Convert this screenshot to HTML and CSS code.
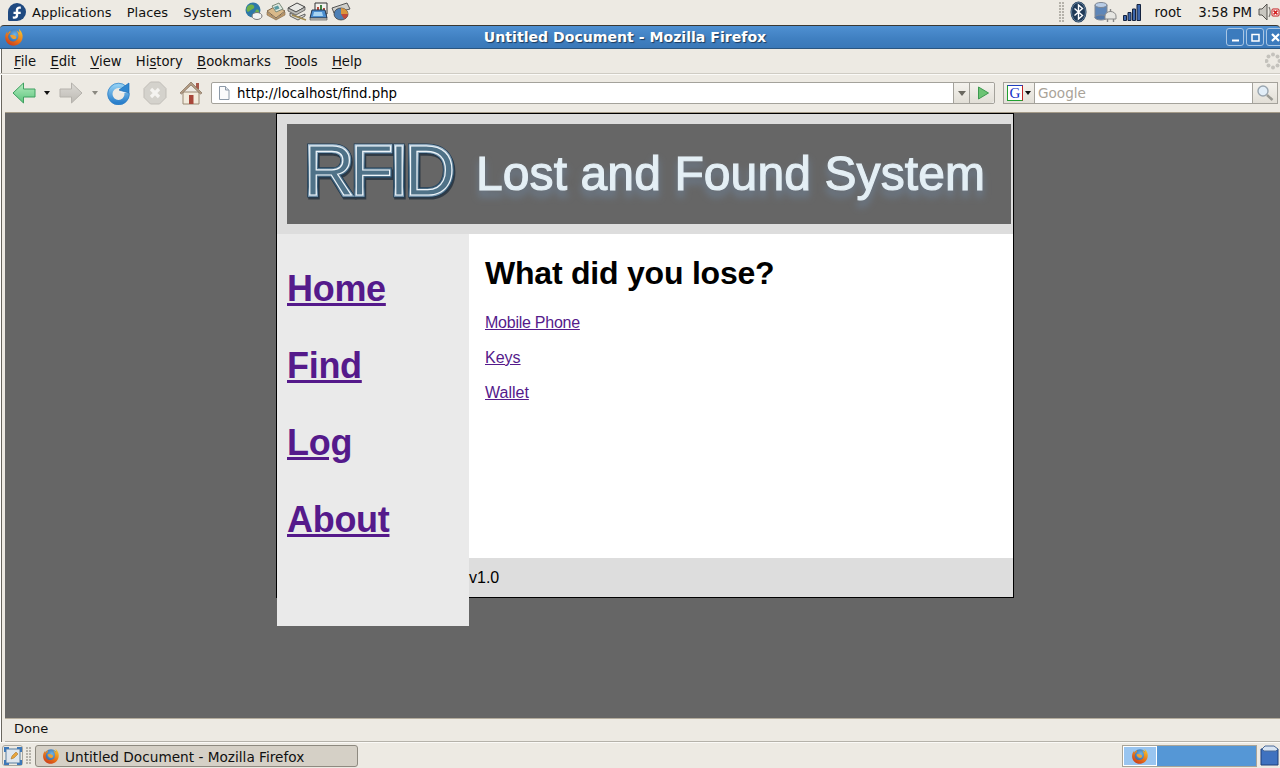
FILE: index.html
```html
<!DOCTYPE html>
<html lang="en">
<head>
<meta charset="utf-8">
<title>Untitled Document - Mozilla Firefox</title>
<link rel="stylesheet" href="styles.css">
</head>
<body>
<svg class="defs" width="0" height="0" aria-hidden="true">
  <defs>
    <radialGradient id="ffGlobe" cx="0.55" cy="0.35" r="0.7"><stop offset="0" stop-color="#6fb6e8"/><stop offset="1" stop-color="#1d4f96"/></radialGradient>
    <linearGradient id="ffFox" x1="0.8" y1="0" x2="0.2" y2="1"><stop offset="0" stop-color="#f7c52e"/><stop offset="0.55" stop-color="#e8731a"/><stop offset="1" stop-color="#c8391a"/></linearGradient>
    <linearGradient id="backG" x1="0" y1="0" x2="0" y2="1"><stop offset="0" stop-color="#b5ecc0"/><stop offset="1" stop-color="#5cc47c"/></linearGradient>
    <linearGradient id="fwdG" x1="0" y1="0" x2="0" y2="1"><stop offset="0" stop-color="#dcdad5"/><stop offset="1" stop-color="#bdbab4"/></linearGradient>
    <linearGradient id="reloadG" x1="0" y1="0" x2="0" y2="1"><stop offset="0" stop-color="#8fcdf2"/><stop offset="1" stop-color="#2a7fcb"/></linearGradient>
    <linearGradient id="steel" gradientUnits="userSpaceOnUse" x1="0" y1="18" x2="0" y2="74"><stop offset="0" stop-color="#b4cbdd"/><stop offset="0.45" stop-color="#54778f"/><stop offset="0.8" stop-color="#3e6078"/><stop offset="1" stop-color="#8fadc4"/></linearGradient>
    <filter id="glow" x="-5%" y="-30%" width="110%" height="170%"><feGaussianBlur stdDeviation="3.500"/></filter>
    <filter id="soft" x="-5%" y="-20%" width="110%" height="140%"><feGaussianBlur stdDeviation="0.6"/></filter>
    <g id="firefox">
      <circle cx="10" cy="10" r="7.5" fill="url(#ffGlobe)"/>
      <path d="M15.5 2.5c2.6 2.6 3.6 5.6 3 8.6-.8 4.6-4.6 7.6-9 7.600C4.800 18.700 1.200 15 1.200 10.300c0-2.300.8-4.300 2.100-5.800-.1 1-.1 1.800.2 2.400.6-1.500 1.800-2.800 3.200-3.500-.4 1-.4 1.600-.1 2.100-1.800 1.200-2.800 3-2.300 5.200.6 2.500 3 4 5.500 3.700 2.500-.3 4.500-2.300 4.600-4.800.1-2.600-.9-4.800-2-6 1.300.4 2.400 1.200 3.100 2.200-.1-1.300-.3-2.400-.5-3.800z" fill="url(#ffFox)"/>
      <path d="M6 8.500c1.500-1.200 3.500-.5 5 .2 1.500.7 1.800 2.300.5 3.100-1.500.9-4-.2-5.500-3.300z" fill="#f0a030"/>
    </g>
    <text id="rfidWord" x="17" y="71" class="rfid-word">RFID</text>
    <text id="bannerWord" x="189" y="66" class="banner-word">Lost and Found System</text>
  </defs>
</svg>

<header class="panel panel-top">
  <svg class="fedora" width="20" height="20" viewBox="0 0 20 20"><path d="M10 1a9 9 0 0 1 0 18H2.500A1.500 1.500 0 0 1 1 17.500V10a9 9 0 0 1 9-9z" fill="#204a80"/><path d="M13.800 4.600c-2.500-.8-5 .6-5 3.200v2H6.500v2.300h2.300v1c0 1.500-1.600 1.800-3 1.200v2.300c2.700.8 5.400-.3 5.400-3.300v-1.200h2.500V9.800h-2.500V8c0-1.300 1.300-1.600 2.600-1.100z" fill="#fff"/></svg>
  <nav class="panel-menu">
    <span>Applications</span><span>Places</span><span>System</span>
  </nav>
  <div class="launchers">
    <svg width="20" height="20" viewBox="0 0 20 20"><circle cx="9" cy="8" r="7.500" fill="#2e78a8"/><path d="M4 4c2-2 5-2 6 0s-1 3-3 4-3 3-4 1 0-4 1-5zM12 8c2-1 3 0 3 2s-2 3-3 2 -1-3 0-4z" fill="#6fb04a"/><ellipse cx="13" cy="14" rx="5" ry="3.500" fill="#f2f2f2" stroke="#777"/></svg>
    <svg width="20" height="20" viewBox="0 0 20 20"><path d="M1 9l9-5 9 5-9 7z" fill="#d9b98a" stroke="#80684a"/><path d="M6 4l7-3 4 6-7 3z" fill="#dfe8df" stroke="#7a8a7a"/><path d="M8 5l4-1.500 1.500 3-4 1.500z" fill="#5a9aa0"/><path d="M1 10l9 7 9-7v3l-9 5-9-5z" fill="#c09a68" stroke="#80684a" stroke-width=".6"/></svg>
    <svg width="20" height="20" viewBox="0 0 20 20"><path d="M1 6l9-5 8 4-9 5z" fill="#e8e8e4" stroke="#444"/><path d="M1 6v3l8 4 9-5V5l-9 5z" fill="#bcbcb8" stroke="#444" stroke-width=".7"/><path d="M3 11l8 4 7-3v2l-7 4-8-4z" fill="#d8d8d4" stroke="#444" stroke-width=".8"/><path d="M5 13l14 5" stroke="#a08a50" stroke-width="1.500"/></svg>
    <svg width="20" height="20" viewBox="0 0 20 20"><path d="M6 1h12v11H6z" fill="#f2f2ee" stroke="#333"/><path d="M8 10V5h2v5zM14 10V6h2v4z" fill="#b84a3c"/><path d="M11 3h2v7h-2z" fill="#3f7f3f"/><path d="M3 8h13l2 8H1z" fill="#4b8ed0" stroke="#22344e"/><path d="M5 10h8l1 4H4z" fill="#a8d4f2"/><path d="M1 16h17v2H1z" fill="#c8c8c4" stroke="#444" stroke-width=".6"/></svg>
    <svg width="20" height="20" viewBox="0 0 20 20"><path d="M1 6l15-5 3 6-16 4z" fill="#cfcfca" stroke="#555"/><ellipse cx="10" cy="12" rx="7" ry="6" fill="#4d7fb4" stroke="#333" stroke-width=".7"/><path d="M10 12V6a7 6 0 0 1 7 6z" fill="#d9943c"/><path d="M10 12h7a7 6 0 0 1-4 5z" fill="#c04a3a"/></svg>
  </div>
  <span class="spacer"></span>
  <span class="handle handle-tray"></span>
  <div class="tray">
    <svg class="tray-bt" width="17" height="22" viewBox="0 0 17 22"><ellipse cx="8.500" cy="11" rx="8" ry="10.500" fill="#1f3a57"/><ellipse cx="8.500" cy="11" rx="7" ry="9.500" fill="none" stroke="#5d7a96"/><path d="M4.500 7.500l8 7-4 3.500V4l4 3.500-8 7" fill="none" stroke="#fff" stroke-width="1.400"/></svg>
    <svg class="tray-power" width="23" height="22" viewBox="0 0 23 22"><path d="M1 4h12v13H1z" fill="#5e86b8" stroke="#7e8794"/><ellipse cx="7" cy="4" rx="6" ry="2.500" fill="#b9cde6" stroke="#7e8794"/><ellipse cx="7" cy="16.500" rx="6" ry="2.500" fill="#4f77aa" stroke="#7e8794"/><path d="M11 15a5.500 4.500 0 0 1 11 0v3H11z" fill="#e6e6e2" stroke="#888"/><path d="M16.500 8v3M13.500 18v3M19.500 18v3" stroke="#888" stroke-width="1.400"/></svg>
    <svg class="tray-signal" width="18" height="17" viewBox="0 0 18 17"><path d="M.5 11.500h3v5h-3zM5 8.500h3v8H5zM9.500 5h3v11.500h-3zM14 .500h3.500v16H14z" fill="#3d67ad" stroke="#14233f"/></svg>
    <span class="tray-user">root</span>
    <span class="tray-clock">3:58 PM</span>
    <svg class="tray-vol" width="22" height="20" viewBox="0 0 22 20"><path d="M1 7h3l5-5v16l-5-5H1z" fill="#c9c7c0" stroke="#55534e"/><path d="M11 5c1.500 3 1.500 7 0 10" fill="none" stroke="#7e7c76" stroke-width="1.200"/><rect x="14" y="7" width="7" height="7" rx="1" fill="#fff" stroke="#c01818"/><path d="M15.500 8.500l4 4M19.500 8.500l-4 4" stroke="#d01818" stroke-width="1.700"/></svg>
  </div>
</header>

<div class="window">
  <div class="titlebar">
    <svg class="title-icon" width="20" height="20" viewBox="0 0 20 20"><use href="#firefox"/></svg>
    <span class="title-text">Untitled Document - Mozilla Firefox</span>
    <div class="wm-buttons">
      <span class="wm-btn"><svg width="11" height="11" viewBox="0 0 11 11"><path d="M2 8.500h7" stroke="#fff" stroke-width="2"/></svg></span>
      <span class="wm-btn"><svg width="11" height="11" viewBox="0 0 11 11"><path d="M2 2.500h7v6.500H2z" fill="none" stroke="#fff" stroke-width="1.500"/></svg></span>
      <span class="wm-btn wm-close"><svg width="11" height="11" viewBox="0 0 11 11"><path d="M2 2l7 7M9 2l-7 7" stroke="#fff" stroke-width="2.200"/></svg></span>
    </div>
  </div>

  <div class="frame">
    <div class="menubar">
      <span class="menu-item"><u>F</u>ile</span>
      <span class="menu-item"><u>E</u>dit</span>
      <span class="menu-item"><u>V</u>iew</span>
      <span class="menu-item">Hi<u>s</u>tory</span>
      <span class="menu-item"><u>B</u>ookmarks</span>
      <span class="menu-item"><u>T</u>ools</span>
      <span class="menu-item"><u>H</u>elp</span>
      <span class="spacer"></span>
      <svg class="throbber" width="16" height="18" viewBox="0 0 16 18"><g fill="#c4c2bc"><circle cx="8" cy="2.500" r="2"/><circle cx="12.500" cy="4.500" r="2"/><circle cx="14.500" cy="9" r="2"/><circle cx="12.500" cy="13.500" r="2"/><circle cx="8" cy="15.500" r="2"/><circle cx="3.500" cy="13.500" r="2"/><circle cx="1.500" cy="9" r="2"/><circle cx="3.500" cy="4.500" r="2"/></g></svg>
    </div>

    <div class="toolbar">
      <svg class="tb-icon tb-back" width="24" height="22" viewBox="0 0 24 22"><path d="M1 11L11.500 1v6H23v8H11.500v6z" fill="url(#backG)" stroke="#3fa060" stroke-linejoin="round"/></svg>
      <span class="caret caret-dark"></span>
      <svg class="tb-icon tb-fwd" width="24" height="22" viewBox="0 0 24 22"><path d="M23 11L12.500 1v6H1v8h11.500v6z" fill="url(#fwdG)" stroke="#b5b2ac" stroke-linejoin="round"/></svg>
      <span class="caret caret-grey"></span>
      <svg class="tb-icon tb-reload" width="24" height="24" viewBox="0 0 24 24"><circle cx="11.500" cy="13" r="8.500" fill="none" stroke="url(#reloadG)" stroke-width="5"/><circle cx="11.500" cy="13" r="10.800" fill="none" stroke="#2f7fc4" stroke-width=".7"/><path d="M13 12h10V1l-4 3-3 3z" fill="#eaf4fb"/><path d="M12 9l10 3V2z" fill="#2f87d0" stroke="#1f6cb0" stroke-width=".7"/></svg>
      <svg class="tb-icon tb-stop" width="24" height="24" viewBox="0 0 24 24"><path d="M7.500 1h9L23 7.500v9L16.500 23h-9L1 16.500v-9z" fill="#d4d2cc" stroke="#c0bdb7"/><path d="M8 8l8 8M16 8l-8 8" stroke="#f4f3f0" stroke-width="3.200"/></svg>
      <svg class="tb-icon tb-home" width="24" height="24" viewBox="0 0 24 24"><path d="M17 2h3v6h-3z" fill="#a85a4c"/><path d="M4 11h16v12H4z" fill="#f2ebdc" stroke="#9a8a74"/><path d="M12 1L1 12l1.500 1L12 4l9.500 9 1.500-1z" fill="#b39c84" stroke="#84705c" stroke-width=".7"/><path d="M10 14h4.500v9H10z" fill="#a8473a"/></svg>

      <div class="urlbar">
        <svg class="page-icon" width="12" height="14" viewBox="0 0 12 14"><path d="M1.500.5h6l3.500 3.500v9.500H1.500z" fill="#fbfbfb" stroke="#8d9aa8"/><path d="M7.500.5V4H11" fill="#dfe4ea" stroke="#8d9aa8"/></svg>
        <span class="url-text">http://localhost/find.php</span>
        <span class="url-drop"><span class="caret caret-mid"></span></span>
        <span class="url-go"><svg width="13" height="14" viewBox="0 0 13 14"><path d="M1.500 1l10 6-10 6z" fill="#6cc474" stroke="#3e9a50"/></svg></span>
      </div>

      <div class="searchbar">
        <span class="search-engine"><span class="g-box">G</span><span class="caret caret-dark"></span></span>
        <span class="search-text">Google</span>
        <span class="search-btn"><svg width="18" height="18" viewBox="0 0 18 18"><circle cx="7" cy="7" r="5" fill="#e2eef8" stroke="#9aa6b0" stroke-width="1.400"/><path d="M11 11l5.500 5" stroke="#9a9a94" stroke-width="2.400"/></svg></span>
      </div>
    </div>

    <main class="viewport">
      <div class="page">
        <div class="page-header">
          <svg class="banner" width="724" height="100" viewBox="0 0 724 100" role="img">
            <rect width="724" height="100" fill="#666"/>
            <use href="#rfidWord" class="rfid-shadow" transform="translate(1 2)"/>
            <use href="#rfidWord" class="rfid-outer"/>
            <use href="#rfidWord" class="rfid-mid"/>
            <use href="#rfidWord" class="rfid-inner"/>
            <use href="#bannerWord" class="banner-glow" transform="translate(0 6)" filter="url(#glow)"/>
            <use href="#bannerWord" class="banner-title" filter="url(#soft)"/>
          </svg>
        </div>
        <aside class="sidebar">
          <h2 class="side-link"><a href="#">Home</a></h2>
          <h2 class="side-link"><a href="#">Find</a></h2>
          <h2 class="side-link"><a href="#">Log</a></h2>
          <h2 class="side-link"><a href="#">About</a></h2>
        </aside>
        <section class="content">
          <h1 class="content-title">What did you lose?</h1>
          <p class="content-item content-item-tight"><a href="#">Mobile Phone</a></p>
          <p class="content-item"><a href="#">Keys</a></p>
          <p class="content-item"><a href="#">Wallet</a></p>
        </section>
        <footer class="page-footer">v1.0</footer>
      </div>
    </main>

    <div class="statusbar">Done</div>
  </div>
</div>

<footer class="panel panel-bottom">
  <span class="show-desktop"><svg width="18" height="18" viewBox="0 0 18 18"><rect x="2" y="2" width="14" height="14" fill="#dfe6ee" stroke="#5b7f9f"/><path d="M0 0h5v2H2v3H0zM13 0h5v5h-2V2h-3zM0 13h2v3h3v2H0zM16 13h2v5h-5v-2h3z" fill="#3d78b8"/><path d="M7 12l1-3 4-4 2 2-4 4z" fill="#e9a43c" stroke="#9a6a20" stroke-width=".5"/></svg></span>
  <span class="handle handle-task"></span>
  <div class="task-button">
    <svg width="18" height="18" viewBox="0 0 20 20"><use href="#firefox"/></svg>
    <span>Untitled Document - Mozilla Firefox</span>
  </div>
  <span class="spacer"></span>
  <div class="workspace">
    <span class="ws-active"><svg width="18" height="18" viewBox="0 0 20 20"><use href="#firefox"/></svg></span>
  </div>
  <svg class="trash" width="19" height="21" viewBox="0 0 19 21"><path d="M1 4h17v16H1z" fill="#3f72c0" stroke="#1e3f78"/><path d="M2 4l3-3h9l4 3-2 2H4z" fill="#d8e4f2" stroke="#4a6a98"/></svg>
</footer>
</body>
</html>
```

FILE: styles.css
```css
* { box-sizing: border-box; }

html, body { margin: 0; height: 100%; }

body {
  width: 1280px;
  height: 768px;
  overflow: hidden;
  display: flex;
  flex-direction: column;
  background: #edeae3;
  color: #111;
  font-family: "DejaVu Sans", sans-serif;
  font-size: 13px;
}

.defs { position: absolute; }
.spacer { flex: 1; }
svg { display: block; flex: none; }

/* GNOME panels */
.panel { display: flex; align-items: center; background: #edeae3; flex: none; }
.panel-top { height: 25px; padding-left: 7px; padding-bottom: 1px; }
.panel-menu { display: flex; gap: 15.300px; margin-left: 5px; font-size: 13px; }
.launchers { display: flex; gap: 1.800px; margin-left: 12px; }
.handle {
  width: 6px;
  background-image: radial-gradient(circle at 1px 1px, #b5b2aa 1px, transparent 1px);
  background-size: 3px 3px;
}
.handle-tray { height: 20px; margin-right: 5px; }
.tray { display: flex; align-items: center; }
.tray-power { margin-left: 7px; }
.tray-signal { margin-left: 6px; }
.tray-user { margin-left: 14px; font-size: 13.330px; }
.tray-clock { margin-left: 17px; font-size: 13.330px; }
.tray-vol { margin-left: 6px; }

/* Window */
.window { flex: 1; display: flex; flex-direction: column; min-height: 0; }
.titlebar {
  height: 24px;
  flex: none;
  position: relative;
  display: flex;
  align-items: center;
  justify-content: center;
  border-top: 1px solid #3a3832;
  border-bottom: 1px solid #2b5680;
  background: linear-gradient(#4f90d2, #3f7fc0 60%, #3a78b8);
  border-radius: 4px 4px 0 0;
  padding: 0 34px 0 4px;
}
.title-icon { position: absolute; left: 4px; top: 1px; }
.title-text {
  color: #fff;
  font-weight: 700;
  font-size: 14.100px;
  text-shadow: 1px 1px 1px #1c3a5c;
}
.wm-buttons { position: absolute; right: -4px; top: 2px; display: flex; gap: 2px; }
.wm-btn {
  width: 18px;
  height: 18px;
  border: 1px solid #a9c6e4;
  border-radius: 3px;
  display: flex;
  align-items: center;
  justify-content: center;
  background: #3c7bbd;
}

.frame {
  flex: 1;
  min-height: 0;
  display: flex;
  flex-direction: column;
  padding-left: 5px;
  position: relative;
  box-shadow: inset 1px 0 0 #fff, inset 2px 0 0 #6a675f;
}
.menubar {
  height: 25px;
  flex: none;
  display: flex;
  align-items: center;
  gap: 14.300px;
  margin-left: -5px;
  padding-left: 14px;
  border-bottom: 1px solid #cfccc4;
  font-size: 13.200px;
}
.menu-item u { text-underline-offset: 2px; }
.throbber { margin-right: -1px; }

.toolbar {
  height: 38px;
  flex: none;
  display: flex;
  align-items: center;
  margin-left: -5px;
  padding: 0 0 1px 12px;
  border-top: 1px solid #fbfaf7;
}
.tb-icon { margin-bottom: 1px; }
.caret { width: 0; height: 0; border-style: solid; border-width: 4px 3px 0; border-color: transparent; }
.caret-dark { border-top-color: #111; }
.caret-grey { border-top-color: #8a8880; }
.caret-mid { border-top-color: #6a6860; border-width: 5px 4px 0; }
.toolbar > .caret { margin-left: 8px; }
.tb-fwd { margin-left: 9px; }
.tb-fwd + .caret { margin-left: 9px; }
.tb-reload { margin-left: 9px; }
.tb-stop { margin-left: 12px; }
.tb-home { margin-left: 12px; }

.urlbar {
  margin-left: 8px;
  width: 784px;
  height: 22px;
  display: flex;
  align-items: stretch;
  background: #fff;
  border: 1px solid #a4a29b;
  border-radius: 2px;
}
.page-icon { margin: 3px 7px 0 6px; }
.url-text { flex: 1; color: #000; font-size: 13.330px; line-height: 21px; }
.url-drop, .url-go, .search-btn, .search-engine {
  display: flex;
  align-items: center;
  justify-content: center;
  background: linear-gradient(#f4f2ed, #e2dfd7);
  border-left: 1px solid #a4a29b;
}
.url-drop { width: 16px; }
.url-go { width: 25px; padding-left: 3px; border-radius: 0 3px 3px 0; }

.searchbar {
  margin-left: 8px;
  width: 275px;
  height: 22px;
  display: flex;
  align-items: stretch;
  background: #fff;
  border: 1px solid #a4a29b;
}
.search-engine { width: 31px; border-left: 0; border-right: 1px solid #a4a29b; gap: 2px; }
.g-box {
  width: 16px;
  height: 16px;
  background: #fff;
  color: #1530c8;
  font-family: "Liberation Serif", serif;
  font-size: 15px;
  line-height: 14px;
  text-align: center;
  border: 1px solid;
  border-color: #1f3fc0 #c02020 #20a030 #20a030;
}
.search-text { flex: 1; padding-left: 3px; color: #a9a398; font-size: 13.600px; line-height: 20px; }
.search-btn { width: 25px; }

/* Firefox content */
.viewport {
  flex: 1;
  min-height: 0;
  background: #666;
  overflow: hidden;
  border-top: 1px solid #a49a88;
  padding-left: 271px;
  font-family: "Liberation Sans", Arial, sans-serif;
}
.page {
  width: 738px;
  border: 1px solid #000;
  background: #ddd;
  color: #000;
}
.page-header { height: 120px; padding: 10px 0 0 10px; }

.rfid-word { font-family: "Liberation Sans", Arial, sans-serif; font-size: 70px; letter-spacing: -4px; }
.rfid-shadow { fill: #1c2a38; stroke: #1c2a38; stroke-width: 5px; opacity: .7; }
.rfid-outer { fill: #1e3c56; stroke: #1e3c56; stroke-width: 5px; }
.rfid-mid { fill: url(#steel); stroke: url(#steel); stroke-width: 3.500px; }
.rfid-inner { fill: #4f7288; stroke: #eef5fa; stroke-width: 1.200px; }
.banner-word { font-family: "Liberation Sans", Arial, sans-serif; font-size: 48px; letter-spacing: .1px; }
.banner-title { fill: #e4eff5; stroke: #e4eff5; stroke-width: 1.100px; }
.banner-glow { fill: #6f859e; stroke: #6f859e; stroke-width: 3px; opacity: .55; }

.sidebar {
  float: left;
  width: 192px;
  height: 392px;
  background: #eaeaea;
  padding: 34px 0 0 10px;
}
.side-link { margin: 0 0 36px; font-size: 36px; line-height: 41px; font-weight: 700; letter-spacing: -.3px; }
a { color: #551a8b; }

.content {
  margin-left: 192px;
  height: 324px;
  background: #fff;
  padding: 21px 16px 0;
}
.content-title { margin: 0 0 22px; font-size: 32px; line-height: 37px; letter-spacing: -.22px; }
.content-item { margin: 0 0 17px; font-size: 16px; line-height: 18px; }
.content-item-tight { letter-spacing: -.25px; }

.page-footer { height: 39px; font-size: 16px; line-height: 39px; }

/* Status bar */
.statusbar {
  height: 24px;
  flex: none;
  border-top: 1px solid #b5ad9d;
  border-bottom: 1px solid #b5b2aa;
  padding-left: 9px;
  font-size: 13px;
  line-height: 20px;
}

.panel-bottom { height: 26px; border-top: 1px solid #fbfaf7; padding-left: 2px; }
.show-desktop {
  width: 21px;
  height: 21px;
  display: flex;
  align-items: center;
  justify-content: center;
  border: 1px solid #a9a69e;
  border-radius: 3px;
}
.handle-task { height: 18px; margin: 0 3px 0 3px; }
.task-button {
  width: 323px;
  height: 22px;
  display: flex;
  align-items: center;
  gap: 5px;
  padding-left: 6px;
  padding-top: 1px;
  border: 1px solid #8e8a80;
  border-radius: 3px;
  background: #d5d0c6;
  font-size: 13.660px;
}
.task-button span { padding-top: 2px; }
.workspace {
  width: 135px;
  height: 22px;
  border: 1px solid #a8a498;
  background: #5597d6;
}
.ws-active {
  width: 34px;
  height: 20px;
  display: flex;
  align-items: center;
  justify-content: center;
  background: #99c5f0;
  border: 1px solid #fff;
}
.trash { margin: 0 1px 0 3px; }
```
